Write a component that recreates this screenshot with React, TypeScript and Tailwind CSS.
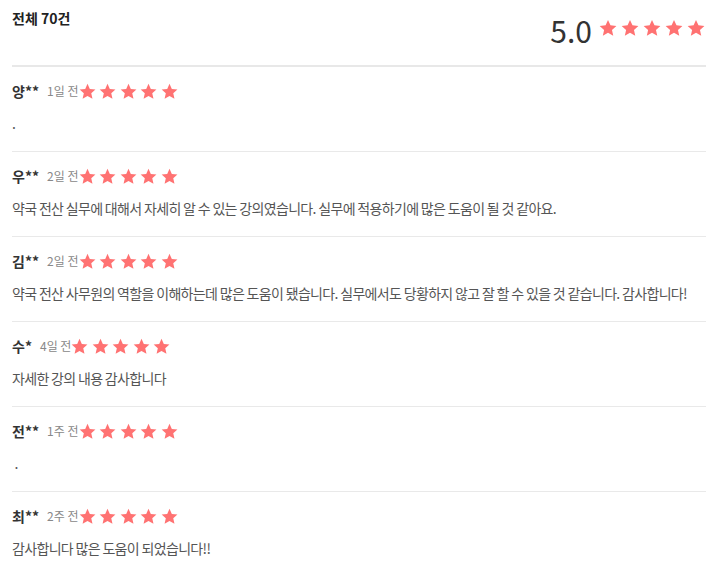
import React from 'react';

interface Review {
  name: string;
  ago: string;
  text: string;
}

const reviews: Review[] = [
  { name: '양**', ago: '1일 전', text: '.' },
  { name: '우**', ago: '2일 전', text: '약국 전산 실무에 대해서 자세히 알 수 있는 강의였습니다. 실무에 적용하기에 많은 도움이 될 것 같아요.' },
  { name: '김**', ago: '2일 전', text: '약국 전산 사무원의 역할을 이해하는데 많은 도움이 됐습니다. 실무에서도 당황하지 않고 잘 할 수 있을 것 같습니다. 감사합니다!' },
  { name: '수*', ago: '4일 전', text: '자세한 강의 내용 감사합니다' },
  { name: '전**', ago: '1주 전', text: '\u00a0.' },
  { name: '최**', ago: '2주 전', text: '감사합니다 많은 도움이 되었습니다!!' },
];

function Star({ size = 17 }: { size?: number }) {
  return (
    <svg width={size} height={size} viewBox="0 0 24 24" className="shrink-0">
      <path
        d="M12 1.2l3.3 7.2 7.9.8-5.9 5.3 1.7 7.8L12 18.3l-6.9 4 1.7-7.8L.9 9.2l7.9-.8z"
        fill="#ff7272"
      />
    </svg>
  );
}

function Stars({ size = 17, gap = 'gap-[3.5px]' }: { size?: number; gap?: string }) {
  return (
    <div className={`flex items-center ${gap}`}>
      {[0, 1, 2, 3, 4].map((i) => (
        <Star key={i} size={size} />
      ))}
    </div>
  );
}

function ReviewRow({ review }: { review: Review }) {
  return (
    <div className="pt-[14px] pb-[18px] border-b border-[#e9e9e9]">
      <div className="flex items-center h-5">
        <span className="text-[14px] font-bold text-[#333]">{review.name}</span>
        <span className="ml-2 text-[12px] text-[#888]">{review.ago}</span>
        <Stars />
      </div>
      <p className="mt-[12px] h-5 leading-5 text-[14px] text-[#555] tracking-[-0.67px] whitespace-nowrap">
        {review.text}
      </p>
    </div>
  );
}

export default function App() {
  return (
    <div
      className="bg-white w-[718px] h-[575px] overflow-hidden pl-3 pr-3"
      style={{ fontFamily: '"Noto Sans CJK KR", "Noto Sans", sans-serif' }}
    >
      <div className="flex justify-between h-[67px] border-b-2 border-[#e8e8e8]">
        <h2 className="pt-[8px] text-[14px] leading-5 font-bold text-[#222]">전체 70건</h2>
        <div className="flex items-start gap-[7px] mr-[1px]">
          <span className="mt-[15px] text-[30px] text-[#333] leading-[30px]">5.0</span>
          <div className="mt-[19px]">
            <Stars size={18} gap="gap-[4px]" />
          </div>
        </div>
      </div>
      <div>
        {reviews.map((r, i) => (
          <ReviewRow key={i} review={r} />
        ))}
      </div>
    </div>
  );
}
